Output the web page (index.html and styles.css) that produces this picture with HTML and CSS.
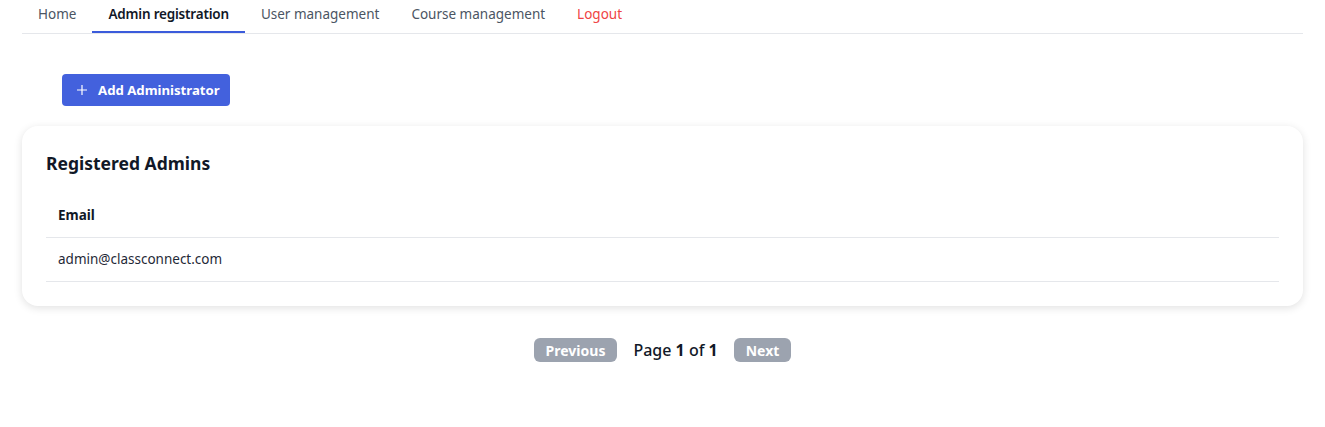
FILE: index.html
```html
<!DOCTYPE html>
<html lang="en">
<head>
<meta charset="utf-8">
<title>Admin registration</title>
<link rel="stylesheet" href="styles.css">
</head>
<body>
<div class="page">
  <nav class="tabs">
    <a class="tab">Home</a>
    <a class="tab active">Admin registration</a>
    <a class="tab">User management</a>
    <a class="tab">Course management</a>
    <a class="tab logout">Logout</a>
  </nav>
  <div class="actions">
    <button class="btn-primary">
      <svg class="plus" width="12" height="12" viewBox="0 0 12 12"><path d="M6 1v10M1 6h10" stroke="#fff" stroke-width="1.2" fill="none"/></svg>
      <span>Add Administrator</span>
    </button>
  </div>
  <section class="card">
    <h2 class="card-title">Registered Admins</h2>
    <table class="table">
      <thead><tr><th>Email</th></tr></thead>
      <tbody><tr><td>admin@classconnect.com</td></tr></tbody>
    </table>
  </section>
  <div class="pager">
    <button class="pg-btn">Previous</button>
    <span class="pg-info">Page <strong>1</strong> of <strong>1</strong></span>
    <button class="pg-btn">Next</button>
  </div>
</div>
</body>
</html>
```
FILE: styles.css
```css
* { box-sizing: border-box; }
body {
  margin: 0;
  font-family: "Noto Sans", "Open Sans", sans-serif;
  color: #1f2937;
  background: #fff;
}
.page { padding: 0 22px; }
.tabs {
  display: flex;
  border-bottom: 1px solid #e5e7eb;
  height: 34px;
}
.tab {
  padding: 4px 16px 0;
  font-size: 13.5px;
  line-height: 20px;
  color: #4b5563;
  border-bottom: 2px solid transparent;
  height: 33px;
}
.tab.active {
  color: #111827;
  font-weight: 600;
  letter-spacing: -0.2px;
  border-bottom-color: #3b5bdb;
}
.tab.logout { color: #ef4444; }
.actions { padding: 40px 40px 20px; }
.btn-primary {
  display: inline-flex;
  align-items: center;
  gap: 10px;
  height: 32px;
  padding: 0 10px 0 14px;
  background: #4361dd;
  color: #fff;
  border: none;
  border-radius: 4px;
  font-family: inherit;
  font-size: 13.2px;
  font-weight: 700;
}
.card {
  background: #fff;
  border-radius: 16px;
  box-shadow: 0 2px 8px rgba(0,0,0,0.12);
  padding: 23px 24px 24px;
}
.card-title {
  margin: 0 0 17px;
  font-size: 17.5px;
  line-height: 28px;
  font-weight: 700;
  color: #111827;
}
.table { width: 100%; border-collapse: collapse; font-size: 13.5px; }
.table th, .table td {
  text-align: left;
  padding: 12px;
  line-height: 19px;
  border-bottom: 1px solid #e5e7eb;
}
.table th { font-weight: 700; color: #111827; }
.table td { color: #1f2937; }
.pager {
  display: flex;
  justify-content: center;
  align-items: center;
  gap: 16px;
  margin-top: 32px;
}
.pg-btn {
  height: 24px;
  padding: 0 12px;
  background: #9ca3af;
  color: #fff;
  border: none;
  border-radius: 6px;
  font-family: inherit;
  font-size: 14px;
  font-weight: 700;
}
.pg-info { font-size: 16px; font-weight: 500; color: #111827; }
.pg-info strong { font-weight: 700; }
```
